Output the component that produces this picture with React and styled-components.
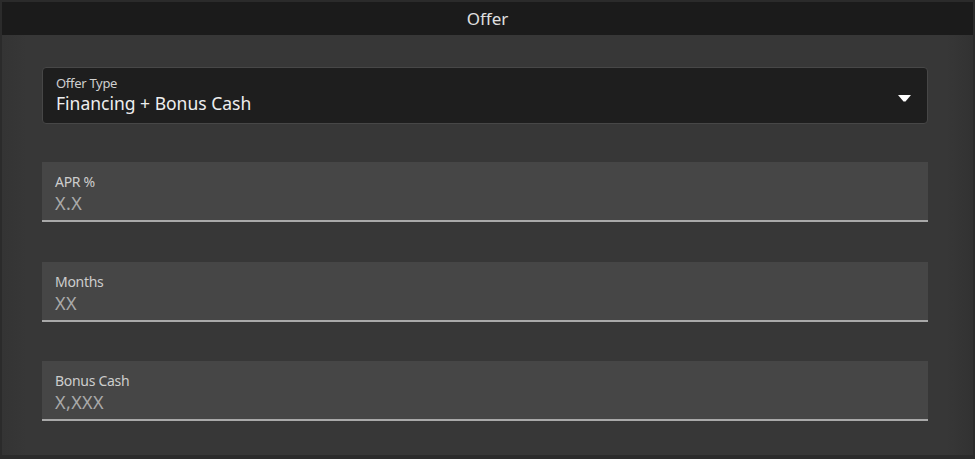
import React from "react";
import styled, { createGlobalStyle } from "styled-components";

const Global = createGlobalStyle`
  html, body { margin: 0; padding: 0; background: #2a2a2a; }
  body { font-family: "Noto Sans", "Liberation Sans", sans-serif; }
`;

const Frame = styled.div`
  width: 975px;
  height: 459px;
  box-sizing: border-box;
  border: 2px solid #2b2b2b;
  border-bottom-width: 4px;
  background: #353535;
  display: flex;
  flex-direction: column;
`;

const Header = styled.div`
  height: 33px;
  background: #1b1b1b;
  color: #e0e0e0;
  font-size: 17px;
  display: flex;
  align-items: center;
  justify-content: center;
`;

const Body = styled.div`
  flex: 1;
  padding: 32px 45px 0 40px;
  display: flex;
  flex-direction: column;
  background: linear-gradient(90deg, #343434 0px, #373737 25px, #373737 945px, #323232 970px);
`;

const Select = styled.div`
  height: 57px;
  box-sizing: border-box;
  background: #1e1e1e;
  border: 1px solid #474747;
  border-radius: 4px;
  padding: 6px 13px 0 13px;
  display: flex;
  align-items: center;
  justify-content: space-between;
  margin-bottom: 38px;
`;

const SelectText = styled.div`
  display: flex;
  flex-direction: column;
  gap: 0;
  align-self: flex-start;
`;

const SmallLabel = styled.div`
  font-size: 13px;
  color: #cfcfcf;
  line-height: 18px;
  letter-spacing: -0.3px;
`;

const SelectValue = styled.div`
  font-size: 17.5px;
  color: #eeeeee;
  line-height: 23px;
`;

const Caret = styled.svg`
  width: 13px;
  height: 7px;
  margin-right: 3px;
`;

const Field = styled.div`
  height: 60px;
  box-sizing: border-box;
  background: #464646;
  border-bottom: 2px solid #a9a9a9;
  padding: 10px 13px 0 13px;
  display: flex;
  flex-direction: column;
  margin-bottom: ${(p) => p.$gap}px;
`;

const FieldLabel = styled.div`
  font-size: 14px;
  color: #cdcdcd;
  line-height: 19px;
  letter-spacing: -0.3px;
`;

const FieldValue = styled.div`
  font-size: 18px;
  color: #aaaaaa;
  line-height: 24px;
  letter-spacing: 0.4px;
`;

const fields = [
  { label: "APR %", value: "X.X", gap: 40 },
  { label: "Months", value: "XX", gap: 39 },
  { label: "Bonus Cash", value: "X,XXX", gap: 0 },
];

export default function App() {
  return (
    <>
      <Global />
      <Frame>
        <Header>Offer</Header>
        <Body>
          <Select>
            <SelectText>
              <SmallLabel>Offer Type</SmallLabel>
              <SelectValue>Financing + Bonus Cash</SelectValue>
            </SelectText>
            <Caret viewBox="0 0 13 7">
              <path d="M0 0 H13 L7.5 6.5 H5.5 Z" fill="#ffffff" />
            </Caret>
          </Select>
          {fields.map((f) => (
            <Field key={f.label} $gap={f.gap}>
              <FieldLabel>{f.label}</FieldLabel>
              <FieldValue>{f.value}</FieldValue>
            </Field>
          ))}
        </Body>
      </Frame>
    </>
  );
}
